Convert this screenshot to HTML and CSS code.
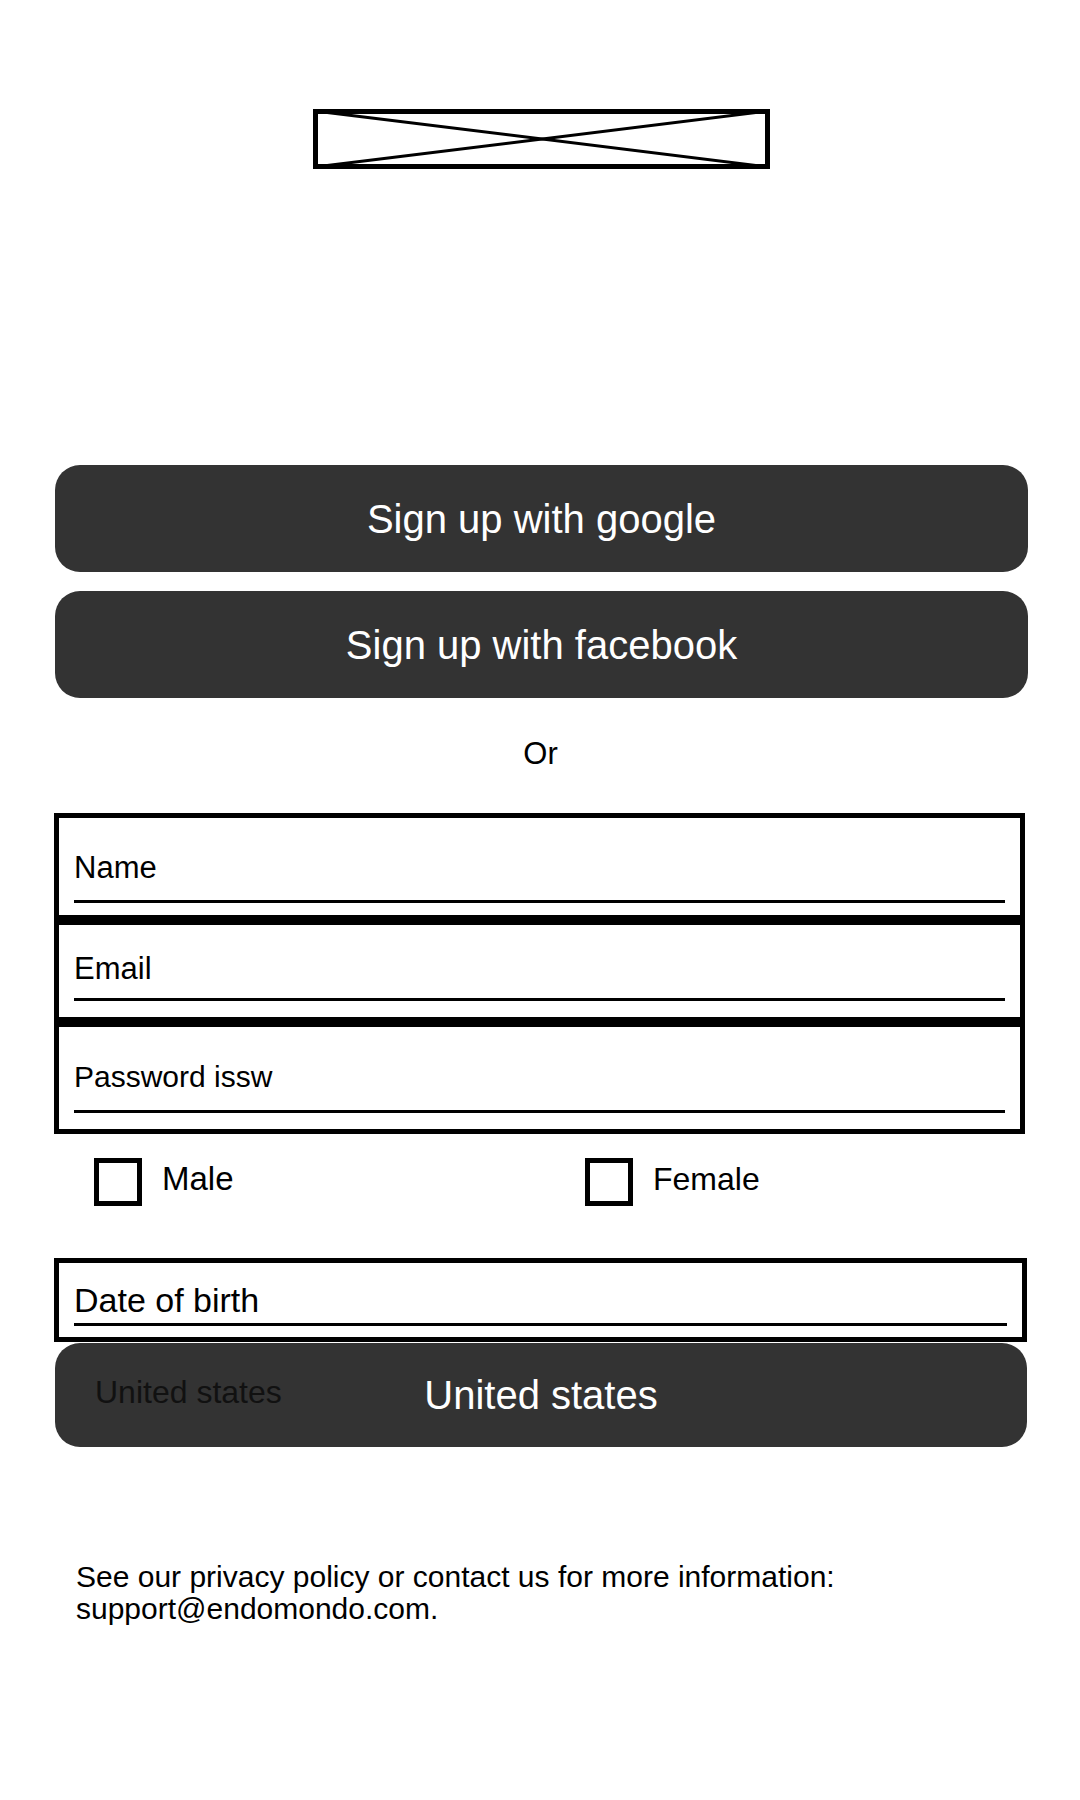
FILE: index.html
```html
<!DOCTYPE html>
<html lang="en">
<head>
<meta charset="utf-8">
<title>Sign up</title>
<link rel="stylesheet" href="styles.css">
</head>
<body>
<div class="page">
  <div class="logo">
    <svg width="457" height="60" viewBox="0 0 457 60" xmlns="http://www.w3.org/2000/svg">
      <line x1="2" y1="2" x2="455" y2="58" stroke="#000" stroke-width="3"/>
      <line x1="2" y1="58" x2="455" y2="2" stroke="#000" stroke-width="3"/>
      <rect x="2.5" y="2.5" width="452" height="55" fill="none" stroke="#000" stroke-width="5"/>
    </svg>
  </div>

  <div class="form">
    <div class="btn btn-google">Sign up with google</div>
    <div class="btn btn-facebook">Sign up with facebook</div>

    <div class="or">Or</div>

    <div class="field field-name">
      <div class="line"><span class="label">Name</span></div>
    </div>
    <div class="field field-email">
      <div class="line"><span class="label">Email</span></div>
    </div>
    <div class="field field-password">
      <div class="line"><span class="label">Password issw</span></div>
    </div>

    <div class="gender">
      <label class="opt"><span class="check"></span><span class="opt-text">Male</span></label>
      <label class="opt"><span class="check"></span><span class="opt-text">Female</span></label>
    </div>

    <div class="field field-dob">
      <div class="line"><span class="label">Date of birth</span></div>
    </div>

    <div class="country">
      <span class="country-dim">United states</span>
      <span class="country-main">United states</span>
    </div>

    <p class="footer">See our privacy policy or contact us for more information: support@endomondo.com.</p>
  </div>
</div>
</body>
</html>
```

FILE: styles.css
```css
html, body {
  margin: 0;
  padding: 0;
  background: #ffffff;
}

body {
  font-family: "Liberation Sans", Arial, Helvetica, sans-serif;
  color: #000;
  width: 1080px;
}

.page {
  display: flex;
  flex-direction: column;
  padding-top: 109px;
}

.logo {
  display: flex;
  justify-content: center;
  padding-left: 3px;
  height: 60px;
}

.logo svg {
  display: block;
}

.form {
  display: flex;
  flex-direction: column;
  align-items: flex-start;
  margin-left: 54px;
  width: 975px;
}

.btn {
  width: 973px;
  height: 107px;
  border-radius: 25px;
  background: #333333;
  color: #ffffff;
  font-size: 40px;
  line-height: 40px;
  display: flex;
  align-items: center;
  justify-content: center;
  margin-left: 1px;
}

.btn-google {
  margin-top: 296px;
}

.btn-facebook {
  margin-top: 19px;
}

.or {
  align-self: stretch;
  margin-top: 40px;
  font-size: 31px;
  line-height: 31px;
  text-align: center;
  padding-right: 2px;
}

.field {
  width: 971px;
  box-sizing: border-box;
  border: 5px solid #000;
  padding: 0 15px;
}

.line {
  border-bottom: 3px solid #000;
  display: flex;
}

.label {
  display: block;
}

.field-name {
  margin-top: 44px;
  padding-bottom: 12px;
}
.field-name .line {
  padding-top: 34px;
  padding-bottom: 17px;
}
.field-name .label,
.field-email .label {
  font-size: 31px;
  line-height: 31px;
}

.field-email {
  padding-bottom: 16px;
}
.field-email .line {
  padding-top: 28px;
  padding-bottom: 14px;
}

.field-password {
  padding-bottom: 16px;
}
.field-password .line {
  padding-top: 35px;
  padding-bottom: 18px;
}
.field-password .label {
  font-size: 30px;
  line-height: 30px;
}

.gender {
  align-self: stretch;
  display: grid;
  grid-template-columns: 491px auto;
  padding-left: 40px;
  margin-top: 24px;
}

.opt {
  display: flex;
  align-items: center;
  gap: 20px;
}

.check {
  width: 48px;
  height: 48px;
  box-sizing: border-box;
  border: 5px solid #000;
  display: block;
}

.opt-text {
  font-size: 33px;
  line-height: 33px;
  margin-bottom: 7px;
}

.opt + .opt .opt-text {
  font-size: 32px;
  margin-bottom: 6px;
}

.field-dob {
  width: 973px;
  margin-top: 52px;
  padding-bottom: 11px;
}
.field-dob .line {
  padding-top: 21px;
  padding-bottom: 6px;
}
.field-dob .label {
  font-size: 34px;
  line-height: 33px;
}

.country {
  margin-left: 1px;
  width: 972px;
  height: 104px;
  margin-top: 1px;
  border-radius: 25px;
  background: #333333;
  display: grid;
  align-items: center;
}

.country-dim,
.country-main {
  grid-area: 1 / 1;
}

.country-dim {
  justify-self: start;
  padding-left: 40px;
  margin-bottom: 6px;
  font-size: 32px;
  line-height: 32px;
  color: #111111;
}

.country-main {
  justify-self: center;
  font-size: 40px;
  line-height: 40px;
  color: #ffffff;
}

.footer {
  margin: 114px 0 0 0;
  padding-left: 22px;
  width: 900px;
  font-size: 30px;
  line-height: 32px;
}
```
